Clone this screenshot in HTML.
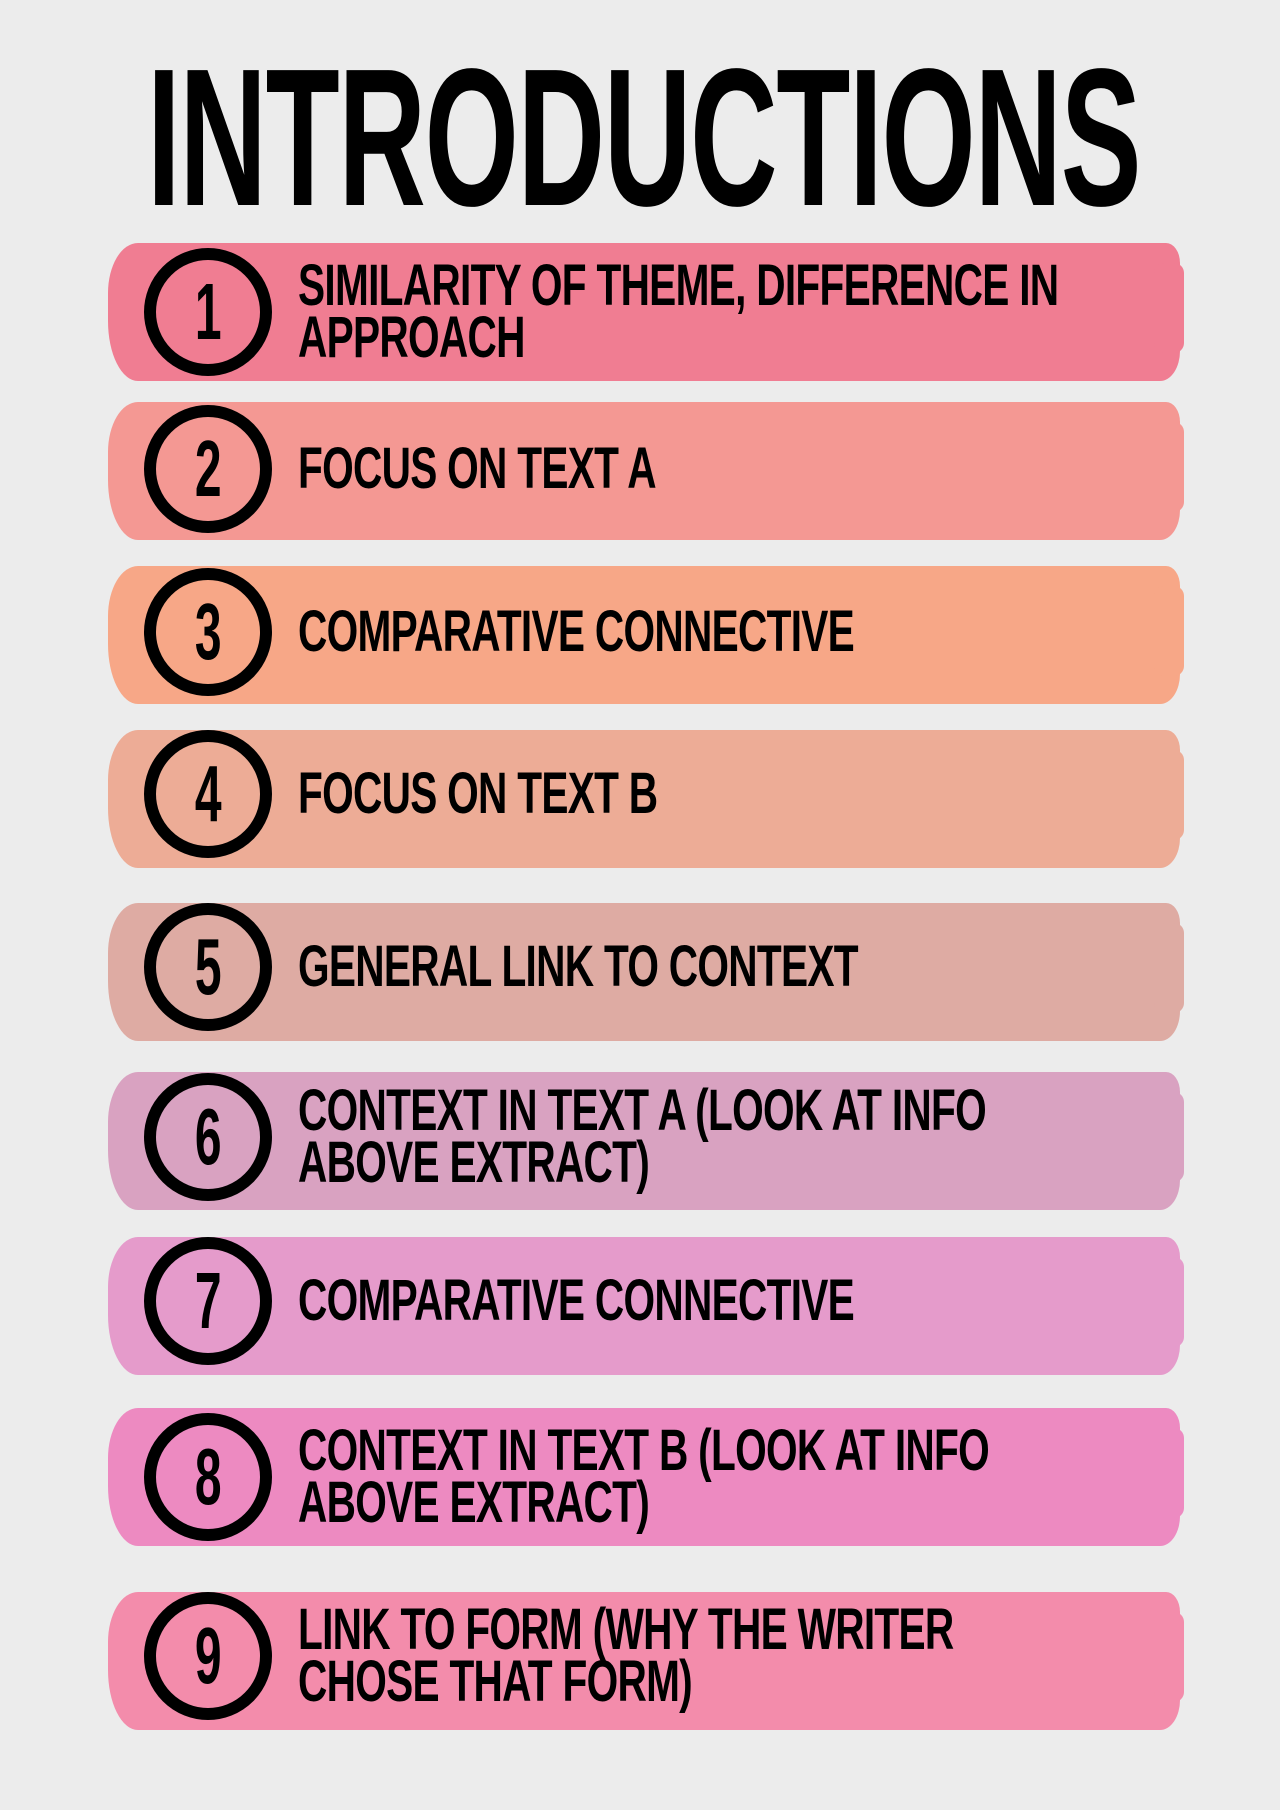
<!DOCTYPE html>
<html><head><meta charset="utf-8"><style>
html,body{margin:0;padding:0}
body{width:1280px;height:1810px;background:#ececec;position:relative;overflow:hidden;font-family:"Liberation Sans",sans-serif}
.title{position:absolute;left:147px;top:38px;font-weight:bold;font-size:196px;line-height:200px;white-space:nowrap;transform:scaleX(0.618);transform-origin:left top;color:#000;letter-spacing:-2px}
.band{position:absolute;left:108px;width:1072px;height:138px;border-radius:30px 14px 20px 30px/50px 20px 30px 60px}
.band::after{content:"";position:absolute;right:-4px;top:20px;width:30px;height:90px;background:inherit;border-radius:10px}
.circ{position:absolute;left:144px;width:104px;height:104px;border:12px solid #000;border-radius:50%;font-weight:bold;font-size:80px;line-height:104px;text-align:center}
.circ span{display:inline-block;transform:scaleX(0.6)}
.txt{position:absolute;left:298px;font-weight:bold;font-size:58px;line-height:52px;white-space:nowrap;transform:scaleX(0.70);transform-origin:left center;letter-spacing:-1px}
</style></head><body>
<div class="title">INTRODUCTIONS</div>

<div class="band" style="top:243px;background:#f07d92"></div>
<div class="circ" style="top:248px"><span>1</span></div>
<div class="txt" style="top:260px">SIMILARITY OF THEME, DIFFERENCE IN<br>APPROACH</div>

<div class="band" style="top:402px;background:#f49893"></div>
<div class="circ" style="top:405px"><span>2</span></div>
<div class="txt" style="top:443px">FOCUS ON TEXT A</div>

<div class="band" style="top:566px;background:#f7a787"></div>
<div class="circ" style="top:568px"><span>3</span></div>
<div class="txt" style="top:606px">COMPARATIVE CONNECTIVE</div>

<div class="band" style="top:730px;background:#edac96"></div>
<div class="circ" style="top:730px"><span>4</span></div>
<div class="txt" style="top:768px">FOCUS ON TEXT B</div>

<div class="band" style="top:903px;background:#deaba3"></div>
<div class="circ" style="top:903px"><span>5</span></div>
<div class="txt" style="top:941px">GENERAL LINK TO CONTEXT</div>

<div class="band" style="top:1072px;background:#d9a2c1"></div>
<div class="circ" style="top:1073px"><span>6</span></div>
<div class="txt" style="top:1085px">CONTEXT IN TEXT A (LOOK AT INFO<br>ABOVE EXTRACT)</div>

<div class="band" style="top:1237px;background:#e59bcb"></div>
<div class="circ" style="top:1237px"><span>7</span></div>
<div class="txt" style="top:1275px">COMPARATIVE CONNECTIVE</div>

<div class="band" style="top:1408px;background:#ed8ac1"></div>
<div class="circ" style="top:1413px"><span>8</span></div>
<div class="txt" style="top:1425px">CONTEXT IN TEXT B (LOOK AT INFO<br>ABOVE EXTRACT)</div>

<div class="band" style="top:1592px;background:#f38cab"></div>
<div class="circ" style="top:1592px"><span>9</span></div>
<div class="txt" style="top:1604px">LINK TO FORM (WHY THE WRITER<br>CHOSE THAT FORM)</div>
</body></html>
